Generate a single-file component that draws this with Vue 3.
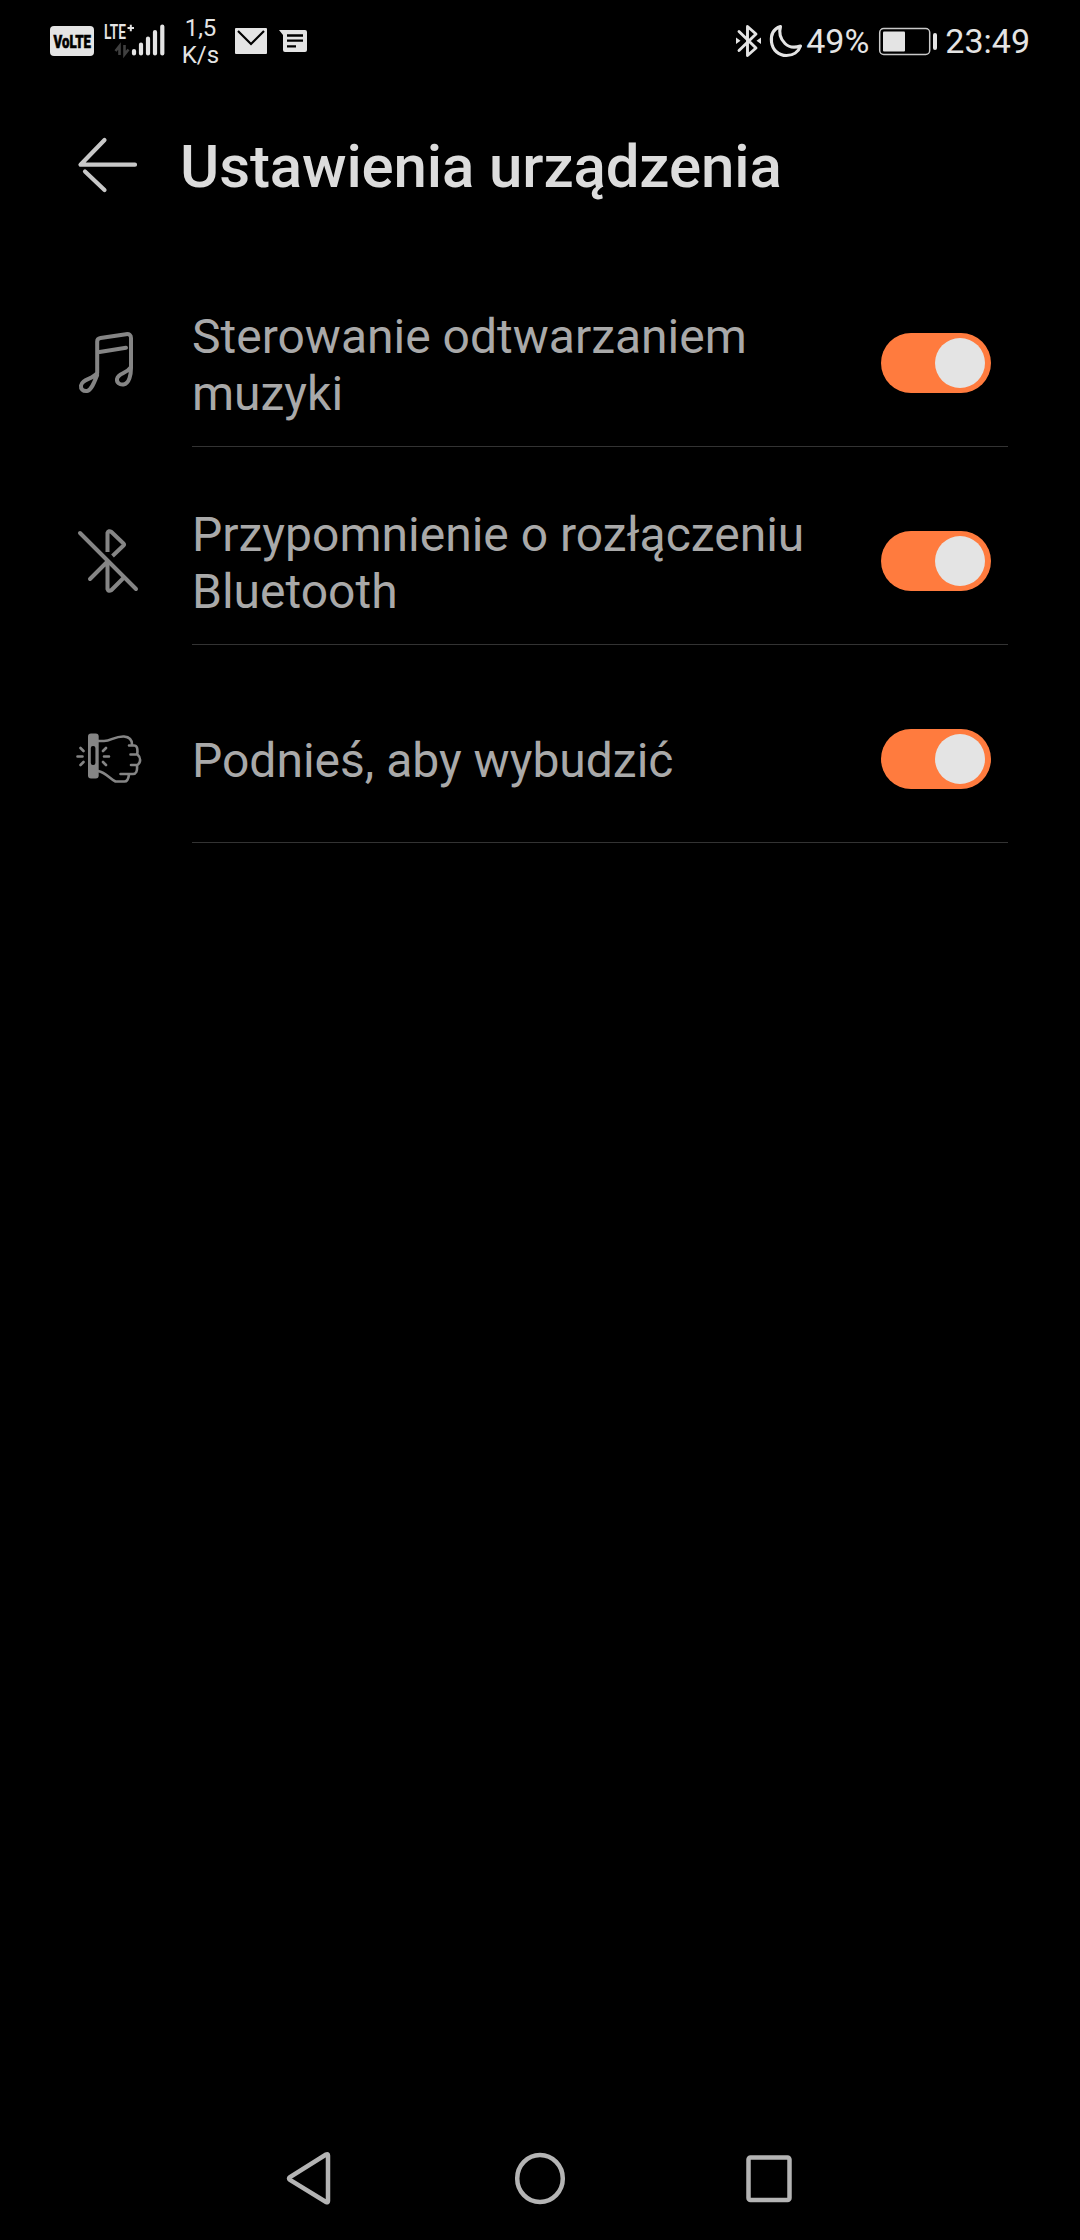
<template>
    <main class="screen">
        <header class="status-bar">
            <div class="status-left">
                <div class="volte">
                    <svg viewBox="50 22 44 38" width="44" height="38">
                        <rect x="50" y="26" width="44" height="30" rx="4" fill="#e4e4e4" />
                        <text x="53.5" y="47.7" font-size="19" font-weight="900" textLength="37.5" lengthAdjust="spacingAndGlyphs" fill="#000" stroke="#000" stroke-width="0.6">VoLTE</text>
                    </svg>
                </div>
                <svg class="signal" viewBox="103 16 63 48" width="63" height="48">
                    <text x="104" y="38.5" font-size="20" font-weight="600" textLength="22" lengthAdjust="spacingAndGlyphs" fill="#e4e4e4">LTE</text>
                    <path d="M127.5 28h6.5M130.8 24.7v6.6" stroke="#e4e4e4" stroke-width="2" />
                    <path d="M119.5 55V46l-4 5M124.5 45v9.5l4-5" fill="none" stroke="#404040" stroke-width="2.6" />
                    <path d="M134 51v2.5M141 44.500v9M148 38.500v15M155 32v21.500M162.300 26.500v27" stroke="#e4e4e4" stroke-width="4.2" stroke-linecap="round" />
                </svg>
                <div class="net-speed">
                    <span>1,5</span>
                    <span>K/s</span>
                </div>
                <svg class="mail" viewBox="235 28 32 26" width="32" height="26">
                    <rect x="235" y="28" width="32" height="26" rx="1" fill="#e4e4e4" />
                    <path d="M238 31l13 13 13-13" fill="none" stroke="#000" stroke-width="2.2" />
                </svg>
                <svg class="message" viewBox="279 30 28 22" width="28" height="22">
                    <path d="M279 30h26a2 2 0 0 1 2 2v18a2 2 0 0 1-2 2h-20a2 2 0 0 1-2-2V35z" fill="#e4e4e4" />
                    <path d="M287 35.500h16M287 40.700h16M287 46.300h9" stroke="#000" stroke-width="2.300" />
                </svg>
            </div>
            <div class="status-right">
                <svg class="bluetooth" viewBox="735 23 27 34" width="27" height="34">
                    <path d="M739 30.500l17 16.500-8.500 7.500V25.500L756 33l-17 16.500" fill="none" stroke="#e4e4e4" stroke-width="2.900" stroke-linejoin="round" stroke-linecap="round" />
                    <path d="M736 36.500l4.500 3.200-4.500 3.200zM761 36.500l-4.500 3.200 4.500 3.200z" fill="#e4e4e4" />
                </svg>
                <svg class="moon" viewBox="769 22 34 36" width="34" height="36">
                    <path d="M780.500 25.500C773 28 770.700 34 771.500 41c1 8 7 13.500 15 13.500 6.500 0 12-3.500 14-9.500-6 2-11.500 1.500-15.500-2.500-4.500-4.500-6.500-10-4.500-17z" fill="none" stroke="#e4e4e4" stroke-width="3.100" stroke-linejoin="round" />
                </svg>
                <span class="percent">49%</span>
                <svg class="battery" viewBox="878 26 60 29" width="60" height="29">
                    <rect x="879.700" y="27.500" width="50" height="26" rx="4" fill="none" stroke="#c9c9c9" stroke-width="1.500" />
                    <rect x="883" y="30.500" width="22" height="20" rx="1" fill="#e4e4e4" />
                    <rect x="933" y="32" width="4" height="17" rx="2" fill="#e4e4e4" />
                </svg>
                <span class="clock">23:49</span>
            </div>
        </header>

        <div class="title-bar">
            <svg viewBox="76 135 64 60" width="64" height="60">
                <path d="M104.500 140L80.500 164.700H135M85 171.500L104.500 190" fill="none" stroke="#c8c8c8" stroke-width="4.200" stroke-linecap="round" stroke-linejoin="round" />
            </svg>
            <h1>Ustawienia urządzenia</h1>
        </div>

        <section class="settings">
            <div v-for="item in settings" :key="item.id" class="row">
                <svg v-if="item.id === 'music'" class="row-icon" viewBox="0 0 100 100" width="100" height="100">
                    <path d="M37.200 65C35 70.500 31.500 80.500 27 81c-4 .500-6.500-2-6-5.500C22 69 32.500 69.500 37.200 63V31.500Q37.200 28.500 40.500 28L66 24.200Q71 23.500 71 28V58C71 64 69.500 73.500 63.500 74.500c-4 .500-7-2-6.500-5.500C58 63 66.500 64 71 57M38 42.200l28-4.500" />
                </svg>
                <svg v-else-if="item.id === 'bluetooth'" class="row-icon" viewBox="0 -2 100 100" width="100" height="100">
                    <path d="M20 23L76 79" />
                    <path d="M47.500 42V23Q48.500 20 51.500 22L63.500 33.500Q64.500 34.500 63.500 35.500L52.500 46" stroke-linecap="butt" />
                    <path d="M30 69L47.500 51.500V79Q48.500 82 51.500 80L63.500 68" />
                </svg>
                <svg v-else class="row-icon" viewBox="0 -4 100 100" width="100" height="100">
                    <rect x="28" y="23.500" width="10.700" height="45" rx="3" class="solid" />
                    <rect x="30.800" y="36" width="4.600" height="19" rx="2" fill="#000" stroke="none" />
                    <path class="thin" d="M38 31h6c7 0 11-5 20-4.500 6 .500 8 4 8 8M69 35.500h5c3 0 3.800 3 3.300 8.500M70.500 44.500h7c3.500 3 3.500 8 0 10.500h-6.500M77 55.500c.500 6-1 8.500-4 8.500H60.500M69 64.500c-.500 4-2 7-4.500 7h-9C49.500 68.500 46 62.500 38 61" />
                    <path class="thin" d="M20.500 38l3 3M17.500 46.500h5M20.500 55l3-3M46 38l-3 3M49 46.500h-5M46 55l-3-3" />
                </svg>
                <div class="row-body">
                    <p>{{ item.label }}</p>
                    <button class="switch" :class="{ on: item.enabled }" role="switch" :aria-checked="item.enabled" @click="item.enabled = !item.enabled">
                        <span class="knob"></span>
                    </button>
                </div>
            </div>
        </section>

        <nav class="nav-bar">
            <svg viewBox="285 2150 48 60" width="48" height="60">
                <path d="M328 2157.500v45.500q0 2-2 1L290 2182q-2-1.500 0-3L326 2156.500q2-1 2 1z" />
            </svg>
            <svg viewBox="509 2150 60 60" width="60" height="60">
                <ellipse cx="540" cy="2180.500" rx="22.800" ry="23.500" />
            </svg>
            <svg viewBox="744 2150 50 60" width="50" height="60">
                <rect x="748.500" y="2159.500" width="41" height="42.500" rx="2" />
            </svg>
        </nav>
    </main>
</template>

<script setup>
import { ref } from "vue";

const settings = ref([
    { id: "music", label: "Sterowanie odtwarzaniem muzyki", enabled: true },
    { id: "bluetooth", label: "Przypomnienie o rozłączeniu Bluetooth", enabled: true },
    { id: "raise", label: "Podnieś, aby wybudzić", enabled: true },
]);
</script>

<style>
body {
    background: #000;
}
</style>

<style scoped>
.screen {
    width: 1080px;
    height: 2240px;
    display: flex;
    flex-direction: column;
    overflow: hidden;
    background: #000;
    color: #e4e4e4;
    font-family: Roboto, sans-serif;
}

svg {
    display: block;
    flex-shrink: 0;
    overflow: visible;
}

.status-bar {
    height: 82px;
    padding: 0 50px;
    display: flex;
    justify-content: space-between;
    flex-shrink: 0;
}

.status-left,
.status-right {
    display: flex;
    align-items: center;
}

.signal {
    margin: 0 0 2px 9px;
}

.net-speed {
    width: 69px;
    padding-top: 2px;
    display: flex;
    flex-direction: column;
    text-align: center;
    font-size: 24px;
    line-height: 27px;
}

.message {
    margin-left: 12px;
}

.moon {
    margin-left: 7px;
}

.percent,
.clock {
    font-size: 34px;
    line-height: 40px;
}

.percent {
    margin-left: 3px;
}

.battery {
    margin: 0 7px 0 9px;
}

.title-bar {
    height: 167px;
    padding: 0 76px 2px;
    display: flex;
    align-items: center;
    flex-shrink: 0;
    box-sizing: border-box;
}

h1 {
    margin: 4px 0 0 40px;
    font-size: 60px;
    font-weight: 500;
    line-height: 70px;
    letter-spacing: -0.12px;
    color: #dcdcdc;
}

.settings {
    flex: 1;
}

.row {
    height: 198px;
    padding: 0 72px 0 60px;
    display: flex;
}

.row-icon {
    margin-top: 61px;
    fill: none;
    stroke: #858585;
    stroke-width: 4;
    stroke-linecap: round;
    stroke-linejoin: round;
}

.row-icon .solid {
    fill: #858585;
    stroke: none;
}

.row-icon .thin {
    stroke-width: 2.6;
}

.row-body {
    flex: 1;
    margin-left: 32px;
    padding: 31px 17px 0 0;
    display: flex;
    align-items: center;
    justify-content: space-between;
    border-bottom: 1px solid #333;
    box-sizing: border-box;
}

.row-body p {
    width: 640px;
    margin: 3px 0 0;
    font-size: 48px;
    line-height: 57px;
    color: #a9a9a9;
}

.switch {
    width: 110px;
    height: 60px;
    padding: 5px 6px;
    display: flex;
    border: 0;
    border-radius: 30px;
    background: #444;
}

.switch.on {
    justify-content: flex-end;
    background: #ff7b3e;
}

.knob {
    width: 50px;
    height: 50px;
    border-radius: 50%;
    background: #e4e4e4;
}

.nav-bar {
    height: 120px;
    padding: 0 286px 2px 285px;
    display: flex;
    align-items: center;
    justify-content: space-between;
    fill: none;
    stroke: #b4b4b4;
    stroke-width: 4.5;
}
</style>
